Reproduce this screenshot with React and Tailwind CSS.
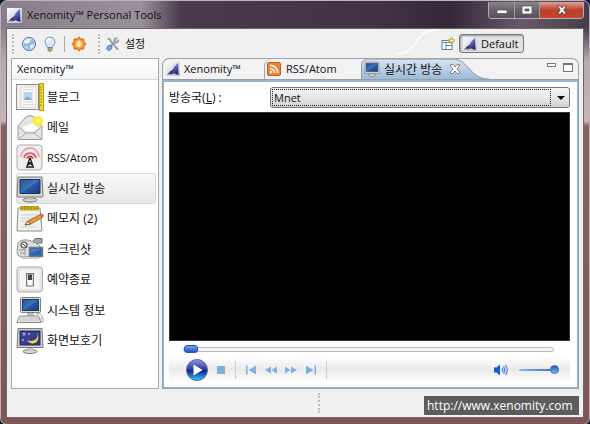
import React from 'react';

function Logo({ className }) {
  return (
    <svg viewBox="0 0 14 14" className={className} aria-hidden="true">
      <defs>
        <linearGradient id="logoBg" x1="0" y1="0" x2="1" y2="1">
          <stop offset="0" stopColor="#ffffff" />
          <stop offset="1" stopColor="#b9bbd2" />
        </linearGradient>
        <linearGradient id="logoFin" x1="0" y1="0" x2="0.7" y2="1">
          <stop offset="0" stopColor="#a3a0cc" />
          <stop offset="0.6" stopColor="#5a58a8" />
          <stop offset="1" stopColor="#24246c" />
        </linearGradient>
      </defs>
      <rect width="14" height="14" fill="url(#logoBg)" />
      <path d="M12 1 L8 5 L4 13 L8 11.500 L12.500 13 Z" fill="url(#logoFin)" />
      <path d="M1 13 L4 9.500 L8 7 L6 11 Z" fill="#34345e" />
    </svg>
  );
}

function Globe() {
  return (
    <svg viewBox="0 0 16 16" className="size-4" aria-hidden="true">
      <circle cx="8" cy="8" r="6.6" fill="#8eb5dd" stroke="#64799a" strokeWidth="1" />
      <path d="M3 4.500 Q6 1.500 10 3 L9 6 L6 8 L3 7Z M9 9 L13 8 L12 12 L9 13Z M4 10 L7 11 L6 13Z" fill="#e6f1fa" />
      <circle cx="8" cy="8" r="5.600" fill="none" stroke="#c7dbed" strokeWidth="0.8" />
    </svg>
  );
}

function Bulb() {
  return (
    <svg viewBox="0 0 16 16" className="size-4" aria-hidden="true">
      <path d="M8 1 A5 5 0 0 1 13 6 C13 8.500 10.500 9.500 10.500 11.500 H5.500 C5.500 9.500 3 8.500 3 6 A5 5 0 0 1 8 1Z" fill="#dbeafa" stroke="#7a94b4" />
      <path d="M5 6 A3 3 0 0 1 8 3" fill="none" stroke="#fff" strokeWidth="1.500" />
      <path d="M6 11.500 H10 V14 L9 15.300 H7 L6 14Z" fill="#b3a878" stroke="#6d705e" strokeWidth="0.700" />
    </svg>
  );
}

function Burst() {
  return (
    <svg viewBox="0 0 16 16" className="size-4" aria-hidden="true">
      <path d="M8 .8 L9.800 3 L12.800 2.800 L13 5.800 L15.300 8 L13 10.200 L12.800 13.200 L9.800 13 L8 15.200 L6.200 13 L3.200 13.200 L3 10.200 L.7 8 L3 5.800 L3.200 2.800 L6.200 3Z" fill="#f0932c" stroke="#c8630c" strokeWidth="0.800" />
      <circle cx="8" cy="8" r="3.600" fill="#ffc46b" />
      <path d="M8 4.500 V9 M6 7.500 L8 10 L10 7.500" stroke="#fff3d5" strokeWidth="1.500" fill="none" />
    </svg>
  );
}

function ToolsIcon() {
  return (
    <svg viewBox="0 0 16 16" className="size-3.5" aria-hidden="true">
      <path d="M2 1.500 L5 3.500 L5.500 5 L12 12.500 L13.500 14.500" fill="none" stroke="#8e959c" strokeWidth="2" />
      <path d="M10 6 L4.500 11" stroke="#8d949b" strokeWidth="2" />
      <path d="M14.500 3 L12 5 L10.500 4.500 L10.500 3 L13 1 Q9 .5 8.800 4 Q9 7 12 7 Q15 6.500 14.500 3Z" fill="#aab0b6" stroke="#737a82" strokeWidth="0.600" />
      <path d="M1 12 Q2 9 5 9.500 L7 11.500 Q6 15.500 3 15.500 Q0 14.500 1 12Z" fill="#7aa5d6" stroke="#456c9c" strokeWidth="0.800" />
    </svg>
  );
}

function BlogIcon() {
  return (
    <svg viewBox="0 0 28 28" className="size-7" aria-hidden="true">
      <rect x="1" y="1.500" width="22" height="25" fill="#eeeeee" />
      <path d="M5 4 H20 V24 H5Z" fill="#fafafa" stroke="#d5d5d5" strokeWidth="0.800" />
      <rect x="7.500" y="9" width="9" height="8" fill="#b8d3ec" />
      <path d="M7.500 17 L11 13.500 L16.500 17Z" fill="#8ba5b5" />
      <path d="M7 6.500 H18 M7 19 H18 M7 21.500 H18" stroke="#d3d3d3" strokeWidth="0.800" />
      <rect x="0.500" y="1.500" width="22" height="25" fill="none" stroke="#222" strokeDasharray="1 1" />
      <rect x="23.500" y="0.500" width="4" height="27" fill="#efd534" stroke="#bd9d12" />
      <path d="M24 4 H26 M24 7 H26 M24 10 H26 M24 13 H26 M24 16 H26 M24 19 H26 M24 22 H26" stroke="#9b8110" strokeWidth="0.700" />
    </svg>
  );
}

function MailIcon() {
  return (
    <svg viewBox="0 0 28 28" className="size-7" aria-hidden="true">
      <defs>
        <radialGradient id="mailGlow">
          <stop offset="0" stopColor="#ffff9b" />
          <stop offset="0.550" stopColor="#f5ea2d" />
          <stop offset="1" stopColor="#f9ee50" stopOpacity="0" />
        </radialGradient>
      </defs>
      <path d="M2 12 L10 3 Q14 0 18 3 L26 12 V25.500 H2Z" fill="#e5e5e3" stroke="#999" />
      <path d="M5 13 L17 8 L23 14 L18 18 H9Z" fill="#fff" stroke="#ccc" strokeWidth="0.600" />
      <path d="M2.500 13 L10 19 H18 L25.500 13 M2.500 25 L10 19 M25.500 25 L18 19" fill="none" stroke="#aaa" />
      <circle cx="22" cy="7" r="6.500" fill="url(#mailGlow)" />
    </svg>
  );
}

function AntennaIcon() {
  return (
    <svg viewBox="0 0 28 28" className="size-7" aria-hidden="true">
      <rect x="1" y="1" width="25" height="25" rx="3" fill="#efefef" stroke="#aaa" />
      <path d="M5 13 A9 9 0 0 1 23 13" fill="none" stroke="#e9a6ac" strokeWidth="2" />
      <path d="M8 14 A6.200 6.200 0 0 1 20 14" fill="none" stroke="#dc6873" strokeWidth="2" />
      <path d="M11 14.500 A3.200 3.200 0 0 1 17 14.500" fill="none" stroke="#c7303f" strokeWidth="1.800" />
      <path d="M13.800 14 L10.500 24 M14.200 14 L17.500 24 M12.500 18 L16 21 M15.500 18 L12 21 M11 23 H17" fill="none" stroke="#222" strokeWidth="1.300" />
    </svg>
  );
}

function MonitorIcon({ className = 'size-7' }) {
  return (
    <svg viewBox="0 0 28 28" className={className} aria-hidden="true">
      <defs>
        <linearGradient id="screenBlue" x1="0" y1="0" x2="1" y2="1">
          <stop offset="0" stopColor="#2a508e" />
          <stop offset="0.500" stopColor="#3d74bd" />
          <stop offset="0.520" stopColor="#2859a5" />
          <stop offset="1" stopColor="#173e7e" />
        </linearGradient>
      </defs>
      <ellipse cx="14" cy="25" rx="7" ry="2" fill="#d9dad6" stroke="#777" />
      <path d="M11 21 H17 V25 H11Z" fill="#c3c5c0" />
      <path d="M2 2 H26 L27 21 Q27 22 26 22 H2 Q1 22 1 21Z" fill="#d4d6d2" stroke="#777b78" />
      <path d="M4 4.500 H24 V18.500 H4Z" fill="url(#screenBlue)" stroke="#183461" />
    </svg>
  );
}

function MemoIcon() {
  return (
    <svg viewBox="0 0 28 28" className="size-7" aria-hidden="true">
      <path d="M2 3 H24 L26 26 H1Z" fill="#f0f0ec" stroke="#8c8c88" />
      <rect x="4" y="1" width="19" height="4.500" fill="#d0b41c" />
      <path d="M6 1 V5 M9 1 V5 M12 1 V5 M15 1 V5 M18 1 V5 M21 1 V5" stroke="#8b7a18" />
      <path d="M5 10 H21 M5 13 H19 M5 16 H14 M5 22 H20" stroke="#d3d3ce" />
      <path d="M9 20 L12 16 L25 9 Q28 9 27 12 L15 19Z" fill="#eb9b36" stroke="#915c18" strokeWidth="0.800" />
      <path d="M9 20 L12 16 L14.500 19Z" fill="#f5dfb4" stroke="#333" strokeWidth="0.600" />
      <path d="M25 9 Q28 9 27 12 L25.500 12.500 L23.500 10Z" fill="#cf6a5b" />
    </svg>
  );
}

function CameraIcon() {
  return (
    <svg viewBox="0 0 28 28" className="size-7" aria-hidden="true">
      <path d="M17 6 L19 3.500 H26 V8 H22 L20 10Z" fill="#a4a8a4" stroke="#6b6f6c" />
      <path d="M2 8 Q5 4 12 5 L20 8 L24 11 V22 H5 Q1 21 1 17Z" fill="#dcdedb" stroke="#8e928e" />
      <circle cx="8" cy="10" r="3" fill="#eee" stroke="#4c504d" strokeWidth="1.200" />
      <path d="M6.500 8.500 L9.500 11.500" stroke="#333" />
      <path d="M3 15 H9 M4 18 H9 M9 14 V20" stroke="#999" />
      <rect x="13.500" y="12.500" width="13" height="9" fill="#2e64ac" stroke="#707a87" strokeWidth="1.500" />
      <path d="M15 14 H25 L15 18Z" fill="#4c80c2" />
      <path d="M6 23 H22" stroke="#ccc" strokeWidth="2" />
    </svg>
  );
}

function SwitchIcon() {
  return (
    <svg viewBox="0 0 28 28" className="size-7" aria-hidden="true">
      <rect x="1" y="1" width="25.500" height="25" rx="3" fill="#e5e5e5" stroke="#aaa" />
      <rect x="4" y="4" width="19.500" height="19" rx="2" fill="#f6f6f6" />
      <rect x="10.500" y="7.500" width="7" height="12.500" fill="#ddd" stroke="#777" />
      <rect x="12" y="8.500" width="4" height="6" fill="#444" />
      <rect x="12" y="14" width="4" height="5" fill="#fff" />
    </svg>
  );
}

function ComputerIcon() {
  return (
    <svg viewBox="0 0 28 28" className="size-7" aria-hidden="true">
      <path d="M11 15 H18 V20 H11Z" fill="#b8bab7" />
      <rect x="4.500" y="1.500" width="20" height="15" rx="1" fill="#d8dad6" stroke="#7b7f7b" />
      <rect x="6.500" y="3.500" width="16" height="11" fill="url(#screenBlue)" stroke="#1a3765" />
      <path d="M3.500 20 H22.500 L25 26.500 H.8Z" fill="#e6e6e4" stroke="#8d8d8a" />
      <path d="M4 22 H22 M3 24 H23" stroke="#b4b4b0" strokeDasharray="2 .7" />
      <path d="M20 18 Q27 17 26 22" fill="none" stroke="#888" strokeWidth="0.700" />
      <ellipse cx="26" cy="24" rx="1.500" ry="2.200" fill="#eee" stroke="#888" strokeWidth="0.600" />
    </svg>
  );
}

function ScreensaverIcon() {
  return (
    <svg viewBox="0 0 28 28" className="size-7" aria-hidden="true">
      <ellipse cx="14" cy="24.500" rx="7" ry="2" fill="#d9dad6" stroke="#777" />
      <path d="M11 21 H17 V24 H11Z" fill="#c3c5c0" />
      <path d="M2 1.500 H26 L27 20.500 H1Z" fill="#d4d6d2" stroke="#777b78" />
      <rect x="4" y="4" width="20" height="14" fill="#3a3c8e" stroke="#22245c" />
      <path d="M19 5 A6 6 0 1 1 11 13 A6.500 5 0 0 0 19 5Z" fill="#f6df3e" />
      <path d="M8 5 V9 M6 7 H10 M13 6 V8 M12 7 H14 M7 12 V14 M6 13 H8" stroke="#c9caf0" strokeWidth="0.800" />
    </svg>
  );
}

function RssIcon() {
  return (
    <svg viewBox="0 0 14 14" className="size-3.5 shrink-0" aria-hidden="true">
      <rect x="0.500" y="0.500" width="13" height="13" rx="1.500" fill="#ee8435" stroke="#c95d16" />
      <circle cx="4" cy="10" r="1.300" fill="#fff" />
      <path d="M3 6.500 A4.500 4.500 0 0 1 7.500 11 M3 3.300 A7.700 7.700 0 0 1 10.700 11" fill="none" stroke="#fff" strokeWidth="1.500" />
    </svg>
  );
}

const items = [
  ['블로그', BlogIcon],
  ['메일', MailIcon],
  ['RSS/Atom', AntennaIcon],
  ['실시간 방송', MonitorIcon],
  ['메모지 (2)', MemoIcon],
  ['스크린샷', CameraIcon],
  ['예약종료', SwitchIcon],
  ['시스템 정보', ComputerIcon],
  ['화면보호기', ScreensaverIcon],
];

function TitleBar() {
  const button = 'flex items-center justify-center border-r border-[#a39ca5] bg-linear-to-b from-[#8b838c] via-[#6b626c] via-50% to-[#57505a]';
  return (
    <header className="flex h-[26px] items-start justify-between">
      <div className="flex h-full items-center gap-[5px] pl-px">
        <Logo className="size-[15px]" />
        <h1>Xenomity™ Personal Tools</h1>
      </div>
      <div className="flex h-[17px] overflow-hidden rounded-b-[4px] border border-t-0 border-[#b5aeb6]">
        <button aria-label="Minimize" className={`${button} w-[26px]`}>
          <svg viewBox="0 0 12 10" className="h-2.5 w-3"><rect x="1" y="5" width="10" height="3.500" fill="#fff" stroke="#555" strokeWidth="0.800" /></svg>
        </button>
        <button aria-label="Maximize" className={`${button} w-[25px]`}>
          <svg viewBox="0 0 12 10" className="h-2.5 w-3"><path d="M1 1 H11 V9 H1Z M4 4 V6 H8 V4Z" fill="#fff" fillRule="evenodd" stroke="#555" strokeWidth="0.800" /></svg>
        </button>
        <button aria-label="Close" className="flex w-[43px] items-center justify-center bg-linear-to-b from-[#dfa297] via-[#b9402c] via-50% to-[#c8432b]">
          <svg viewBox="0 0 12 10" className="h-2.5 w-3"><path d="M1.500 1 H4.500 L6 3 L7.500 1 H10.500 L7.700 5 L10.500 9 H7.500 L6 7 L4.500 9 H1.500 L4.300 5Z" fill="#fff" stroke="#534" strokeWidth="0.800" /></svg>
        </button>
      </div>
    </header>
  );
}

function Grip({ className }) {
  return <span className={`w-0 border-l-2 border-dotted border-[#bbb] ${className}`} />;
}

function Toolbar() {
  return (
    <div className="flex h-[29px] items-center">
      <Grip className="ml-[5px] h-5" />
      <button aria-label="Web" className="ml-[7px]"><Globe /></button>
      <button aria-label="Tip" className="ml-[5px]"><Bulb /></button>
      <span className="ml-1.5 h-4 w-px bg-[#aaa]" />
      <button aria-label="Update" className="ml-1.5"><Burst /></button>
      <Grip className="ml-[11px] h-5" />
      <button className="ml-1.5 flex items-center gap-[5px]"><ToolsIcon />설정</button>
      <svg viewBox="0 0 40 29" className="ml-auto h-[29px] w-10 shrink-0" aria-hidden="true">
        <path d="M0 25 C20 25 17 1 39 1" fill="none" stroke="#fff" strokeWidth="1.500" />
      </svg>
      <button aria-label="Open perspective" className="ml-1">
        <svg viewBox="0 0 14 14" className="size-3.5">
          <rect x="1" y="3.500" width="10" height="9" fill="#fff" stroke="#5b8190" />
          <path d="M1 5.500 H11 M5 5 V12 M5 8.500 H11" stroke="#5b8fb0" />
          <path d="M10.500 .5 V6.500 M7.500 3.500 H13.500" stroke="#c09c2a" strokeWidth="2.400" />
          <path d="M10.500 1.500 V5.500 M8.500 3.500 H12.500" stroke="#fff2a6" />
        </svg>
      </button>
      <button className="mr-[59px] ml-1 flex h-[19px] w-[65px] items-center gap-1 rounded-[3px] border border-[#777] bg-[#e2e2e2] pl-[3px] shadow-[inset_1px_1px_2px_#999]">
        <Logo className="size-3.5 shrink-0" />Default
      </button>
    </div>
  );
}

function Sidebar() {
  return (
    <nav aria-label="Xenomity" className="w-[148px] shrink-0 border border-[#a4a9b0] bg-white">
      <h2 className="h-[21px] border-b border-[#d9dde2] bg-linear-to-b from-white to-[#f3f4f6] pl-[5px] leading-5">Xenomity™</h2>
      <ul className="grid h-[276px] grid-rows-9 pt-0.5 pr-0.5 pl-1">
        {items.map(([label, Icon]) => (
          <li key={label} className="min-h-0">
            <button
              className={`flex h-full w-full items-center gap-[3px] rounded-[3px] text-left ${
                label === '실시간 방송' ? 'bg-linear-to-b from-[#f9f9f9] to-[#e7e7e7] ring-1 ring-[#d8d8d8] ring-inset' : ''
              }`}
            >
              <Icon />
              <span className={label === 'RSS/Atom' ? 'text-[11px]' : 'pt-px text-[12px]'}>{label}</span>
            </button>
          </li>
        ))}
      </ul>
    </nav>
  );
}

function Tabs() {
  return (
    <div role="tablist" className="flex h-[21px] overflow-hidden rounded-t-[7px] border border-b-0 border-[#9da3aa] bg-[#f2f2f2]">
      <button role="tab" aria-selected="false" className="flex w-[101px] items-center gap-1 pl-[3px]">
        <Logo className="size-3.5 shrink-0" />Xenomity™
      </button>
      <button role="tab" aria-selected="false" className="flex w-[97px] items-center gap-[5px] rounded-tl-[7px] border-l border-[#9da3aa] pl-0.5">
        <RssIcon />RSS/Atom
      </button>
      <div className="relative w-[128px]">
        <svg viewBox="0 0 128 20" className="absolute inset-0 h-5 w-32" aria-hidden="true">
          <defs>
            <linearGradient id="activeTab" x1="0" y1="0" x2="0" y2="1">
              <stop offset="0" stopColor="#d9e5f1" />
              <stop offset="1" stopColor="#9ab8d6" />
            </linearGradient>
          </defs>
          <path d="M.5 21 V6 Q1 0 7 0 H92 C108 0 108 20 128 20 V21Z" fill="url(#activeTab)" stroke="#8f9aa8" />
        </svg>
        <div className="relative flex h-full items-center pl-[3px]">
          <button role="tab" aria-selected="true" className="flex items-center gap-1 text-[12px]">
            <MonitorIcon className="size-4 shrink-0" />
            <span className="pt-px">실시간 방송</span>
          </button>
          <button aria-label="Close tab" className="ml-[7px]">
            <svg viewBox="0 0 12 12" className="size-3">
              <path d="M1.500 1.500 H4 L6 4 L8 1.500 H10.500 V3 L8 6 L10.500 9 V10.500 H8 L6 8 L4 10.500 H1.500 V9 L4 6 L1.500 3Z" fill="#fff" stroke="#777" strokeWidth="0.900" />
            </svg>
          </button>
        </div>
      </div>
      <div className="ml-auto flex items-start gap-[7px] pt-1 pr-[5px]">
        <button aria-label="Minimize view" className="h-1 w-[9px] border border-[#777] bg-white" />
        <button aria-label="Maximize view" className="h-[9px] w-2.5 border border-t-2 border-[#777] bg-white" />
      </div>
    </div>
  );
}

function Skip({ label, d }) {
  return (
    <button aria-label={label}>
      <svg viewBox="0 0 12 10" className="h-2.5 w-3"><path d={d} fill="#84aee0" /></svg>
    </button>
  );
}

function Player() {
  return (
    <div className="bg-white">
      <div className="flex h-4 items-center pr-4 pl-3.5">
        <input
          type="range"
          aria-label="Position"
          defaultValue="0"
          className="h-[5px] w-full appearance-none rounded-full border border-[#bbb] bg-[#f4f4f4] [&::-webkit-slider-thumb]:h-2 [&::-webkit-slider-thumb]:w-3.5 [&::-webkit-slider-thumb]:appearance-none [&::-webkit-slider-thumb]:rounded-[3px] [&::-webkit-slider-thumb]:border [&::-webkit-slider-thumb]:border-[#2850a8] [&::-webkit-slider-thumb]:bg-linear-to-b [&::-webkit-slider-thumb]:from-[#7ba3e8] [&::-webkit-slider-thumb]:to-[#1d51c4]"
        />
      </div>
      <div className="flex h-[25px] items-center bg-linear-to-b from-white from-0% via-[#eaeaea] via-50% to-white pl-4">
        <button aria-label="Play">
          <svg viewBox="0 0 24 24" className="size-6">
            <defs>
              <linearGradient id="playBall" x1="0" y1="0" x2="0" y2="1">
                <stop offset="0" stopColor="#9299d4" />
                <stop offset="0.450" stopColor="#2d3fa6" />
                <stop offset="0.550" stopColor="#0b2392" />
                <stop offset="1" stopColor="#35cfff" />
              </linearGradient>
            </defs>
            <circle cx="12" cy="12" r="10.500" fill="url(#playBall)" stroke="#5a66a8" />
            <path d="M8.500 6.500 L17.500 12 L8.500 17.500Z" fill="#fff" />
          </svg>
        </button>
        <button aria-label="Stop" className="ml-2 size-2 bg-[#84aee0]" />
        <span className="mr-[9px] ml-2.5 h-[18px] w-px bg-[#c5cedb]" />
        <div className="flex gap-2">
          <Skip label="Previous" d="M1 .5 H2.500 V9.500 H1Z M11 .5 V9.500 L3.500 5Z" />
          <Skip label="Rewind" d="M6 1.500 V8.500 L0 5Z M12 1.500 V8.500 L6.500 5Z" />
          <Skip label="Forward" d="M0 1.500 V8.500 L5.500 5Z M6 1.500 V8.500 L12 5Z" />
          <Skip label="Next" d="M1 .5 V9.500 L8.500 5Z M9.500 .5 H11 V9.500 H9.500Z" />
        </div>
        <span className="ml-[9px] h-[18px] w-px bg-[#c5cedb]" />
        <button aria-label="Volume" className="ml-auto">
          <svg viewBox="0 0 15 12" className="h-3 w-[15px]">
            <path d="M0 3.500 H2.500 L6 .5 V11.500 L2.500 8.500 H0Z" fill="#175fc5" />
            <path d="M8 4 Q9.500 6 8 8 M9.500 2.500 Q12 6 9.500 9.500 M11.500 1 Q15 6 11.500 11" fill="none" stroke="#4c8bdb" strokeWidth="1.300" />
          </svg>
        </button>
        <input
          type="range"
          aria-label="Volume level"
          defaultValue="100"
          className="mr-[11px] ml-2.5 h-0.5 w-10 appearance-none rounded-full bg-linear-to-r from-[#91b6ea] to-[#2b63c4] [&::-webkit-slider-thumb]:size-[9px] [&::-webkit-slider-thumb]:appearance-none [&::-webkit-slider-thumb]:rounded-full [&::-webkit-slider-thumb]:border [&::-webkit-slider-thumb]:border-[#3c66b4] [&::-webkit-slider-thumb]:bg-linear-to-b [&::-webkit-slider-thumb]:from-[#2459b8] [&::-webkit-slider-thumb]:to-[#7fb9f4]"
        />
      </div>
    </div>
  );
}

function Broadcast() {
  return (
    <main className="flex min-w-0 flex-1 flex-col">
      <Tabs />
      <section className="flex flex-1 flex-col border-2 border-t-3 border-[#9db5cb] bg-white pt-[5px] pr-[7px] pb-[5px] pl-[5px] outline-1 -outline-offset-1 outline-[#8fa2b4]">
        <div className="mb-1 flex items-center">
          <label htmlFor="station" className="w-[101px] text-[12px]">방송국(<u>L</u>) :</label>
          <div className="relative h-[21px] flex-1 rounded-[3px] border border-[#777] bg-linear-to-b from-[#f4f4f4] via-[#e8e8e8] to-[#d2d2d2]">
            <select id="station" className="block h-full w-full appearance-none pl-[3px] text-[11px] leading-[19px] outline-none">
              <option>Mnet</option>
            </select>
            <span className="pointer-events-none absolute inset-y-px right-[18px] left-px border border-dotted border-[#222]" />
            <svg viewBox="0 0 8 4" className="pointer-events-none absolute top-2 right-1 h-1 w-2" aria-hidden="true"><path d="M0 0 H8 L4 4Z" fill="#000" /></svg>
          </div>
        </div>
        <div className="min-h-[228px] flex-1 border border-[#333] bg-black" />
        <Player />
      </section>
    </main>
  );
}

export default function App() {
  return (
    <div className="min-h-screen bg-[#141827] pb-px font-['Open_Sans','Noto_Sans_CJK_KR',sans-serif] text-[11px] leading-4 text-[#111]">
      <div className="relative flex min-h-[423px] flex-col rounded-[7px] border border-[#bdb3bb] bg-[linear-gradient(to_bottom,transparent_26px,#b7aaaf_60px,#c7b4b7_120px,#89625f_125px,#7d5655_100%),linear-gradient(to_right,#887e89,#9a909b_140px,#493b4b_180px,#403242_380px,#34283a_450px,#675a69_520px,#463c4a)] px-[5px] pt-px pb-1.5">
        <TitleBar />
        <div className="flex flex-1 flex-col border border-[#6d6468] bg-[#f0f0f0]">
          <Toolbar />
          <div className="flex min-h-[331px] flex-1 gap-[3px] pr-1 pl-1">
            <Sidebar />
            <Broadcast />
          </div>
          <footer className="flex h-7 items-center justify-center pl-12">
            <Grip className="h-5" />
          </footer>
        </div>
        <a href="http://www.xenomity.com" className="absolute right-2.5 bottom-[9px] flex h-[19px] w-[155px] items-center bg-[#5c5c5c] pl-[3px] text-[12px] text-white">
          http://www.xenomity.com
        </a>
      </div>
    </div>
  );
}
